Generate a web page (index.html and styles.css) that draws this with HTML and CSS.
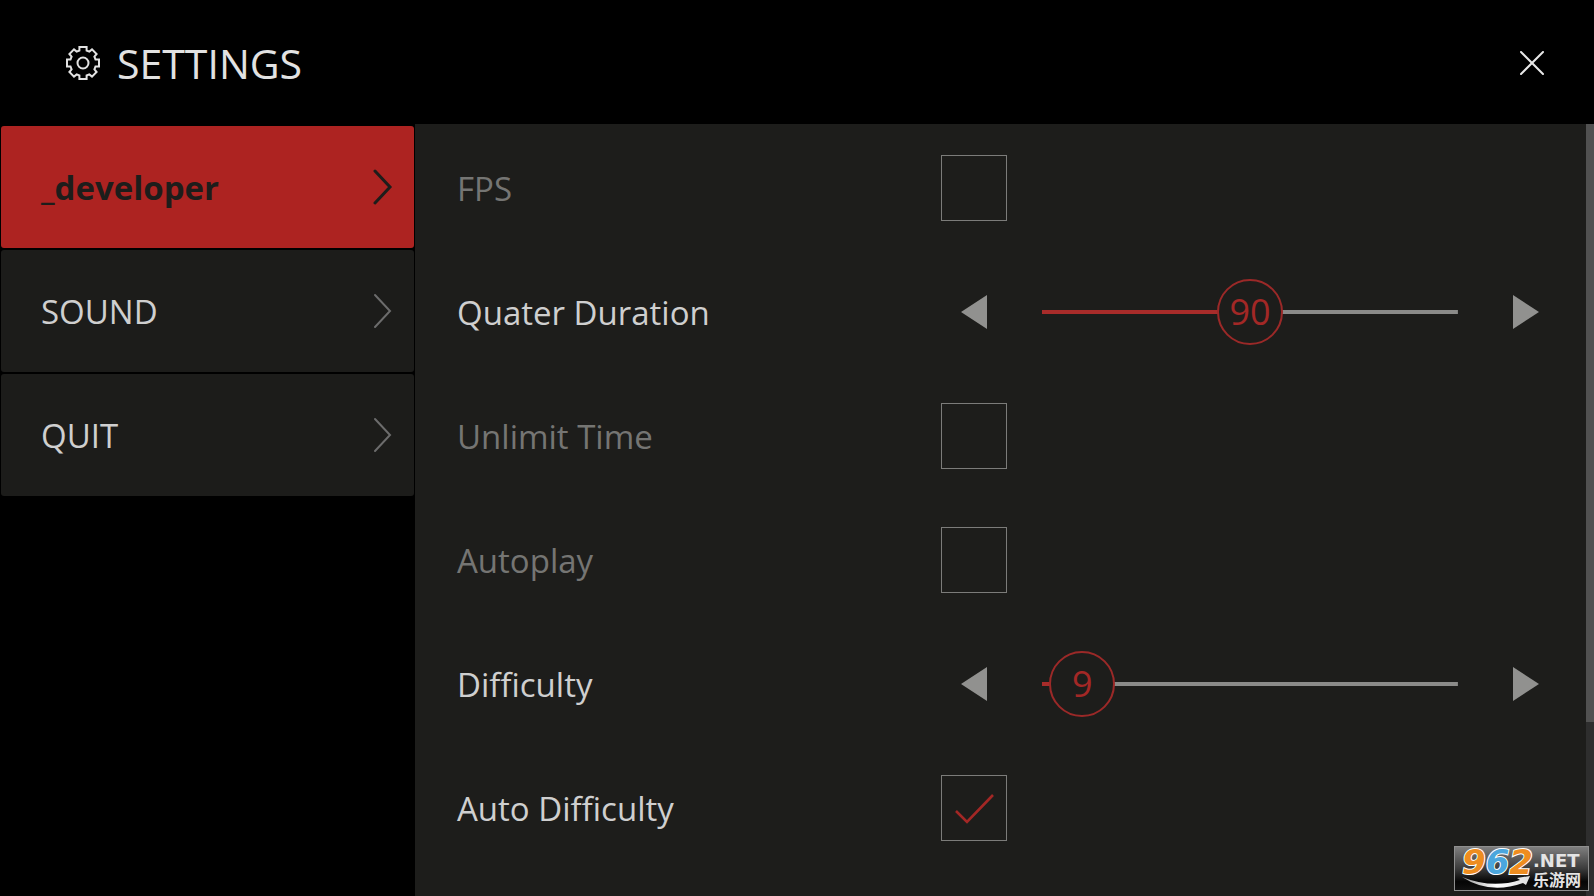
FILE: index.html
```html
<!DOCTYPE html>
<html lang="en">
<head>
  <meta charset="UTF-8">
  <meta name="viewport" content="width=device-width, initial-scale=1">
  <title>Settings</title>
  <link rel="stylesheet" href="styles.css">
</head>
<body>
  <header class="header">
    <svg class="gear" viewBox="-18 -18 36 36" width="36" height="36" aria-hidden="true">
      <path d="M-3.6-16H3.6V-12.5L6.3-11.4L9-13.6L13.6-9L11.4-6.3L12.5-3.6H16V3.6H12.5L11.4 6.3L13.6 9L9 13.6L6.3 11.4L3.6 12.5V16H-3.6V12.5L-6.3 11.4L-9 13.6L-13.6 9L-11.4 6.3L-12.5 3.6H-16V-3.6H-12.5L-11.4-6.3L-13.6-9L-9-13.6L-6.3-11.4L-3.6-12.5Z"/>
      <circle r="5.5"/>
    </svg>
    <h1>SETTINGS</h1>
    <button class="close" type="button" aria-label="Close">
      <svg viewBox="0 0 24 24" width="24" height="24"><path d="M1 1L23 23M23 1L1 23"/></svg>
    </button>
  </header>

  <div class="content">
    <nav class="menu">
      <button class="menu-item active" type="button">
        _developer
        <svg class="chevron" viewBox="0 0 20 36" width="20" height="36"><path d="M2 2L17 18L2 34"/></svg>
      </button>
      <button class="menu-item" type="button">
        SOUND
        <svg class="chevron" viewBox="0 0 20 36" width="20" height="36"><path d="M2 2L17 18L2 34"/></svg>
      </button>
      <button class="menu-item" type="button">
        QUIT
        <svg class="chevron" viewBox="0 0 20 36" width="20" height="36"><path d="M2 2L17 18L2 34"/></svg>
      </button>
    </nav>

    <main class="panel">
      <div class="row off">
        <label for="fps">FPS</label>
        <input class="check" type="checkbox" id="fps">
      </div>

      <div class="row">
        <label for="duration">Quater Duration</label>
        <div class="stepper">
          <button class="arrow" type="button" data-step="-1" aria-label="Decrease">
            <svg viewBox="0 0 26 34" width="26" height="34"><path d="M26 0V34L0 17Z"/></svg>
          </button>
          <div class="slider" style="--pos: 0.5">
            <input type="range" id="duration" min="0" max="180" value="90">
            <output for="duration">90</output>
          </div>
          <button class="arrow" type="button" data-step="1" aria-label="Increase">
            <svg viewBox="0 0 26 34" width="26" height="34"><path d="M0 0V34L26 17Z"/></svg>
          </button>
        </div>
      </div>

      <div class="row off">
        <label for="unlimit">Unlimit Time</label>
        <input class="check" type="checkbox" id="unlimit">
      </div>

      <div class="row off">
        <label for="autoplay">Autoplay</label>
        <input class="check" type="checkbox" id="autoplay">
      </div>

      <div class="row">
        <label for="difficulty">Difficulty</label>
        <div class="stepper">
          <button class="arrow" type="button" data-step="-1" aria-label="Decrease">
            <svg viewBox="0 0 26 34" width="26" height="34"><path d="M26 0V34L0 17Z"/></svg>
          </button>
          <div class="slider" style="--pos: 0.02">
            <input type="range" id="difficulty" min="1" max="400" value="9">
            <output for="difficulty">9</output>
          </div>
          <button class="arrow" type="button" data-step="1" aria-label="Increase">
            <svg viewBox="0 0 26 34" width="26" height="34"><path d="M0 0V34L26 17Z"/></svg>
          </button>
        </div>
      </div>

      <div class="row">
        <label for="autodiff">Auto Difficulty</label>
        <input class="check" type="checkbox" id="autodiff" checked>
      </div>
    </main>

    <div class="scrollbar"><div class="scroll-thumb"></div></div>
  </div>

  <div class="watermark">
    <svg viewBox="0 -10 135 55" width="135" height="55">
      <defs>
        <linearGradient id="plate" x1="0" y1="0" x2="0" y2="1">
          <stop offset="0" stop-color="#808080"/>
          <stop offset="0.5" stop-color="#3c3c3c"/>
          <stop offset="0.8" stop-color="#050505"/>
          <stop offset="1" stop-color="#111"/>
        </linearGradient>
        <linearGradient id="swoosh" x1="0" x2="1">
          <stop offset="0" stop-color="#999"/>
          <stop offset="0.5" stop-color="#fff"/>
          <stop offset="1" stop-color="#ddd"/>
        </linearGradient>
      </defs>
      <rect x="0.5" y="0.5" width="134" height="44" fill="url(#plate)" stroke="#8f8f8f"/>
      <text class="wm-num" x="8" y="28"><tspan class="orange">9</tspan><tspan class="blue">6</tspan><tspan class="orange">2</tspan></text>
      <path d="M8 31Q38 43 66 34L63 32L76 30L72 39L69 37Q36 49 8 31Z" fill="url(#swoosh)"/>
      <text class="wm-net" x="79" y="21">.NET</text>
      <text class="wm-cn" x="79" y="40">乐游网</text>
    </svg>
  </div>

  <script>
    document.querySelectorAll('.slider').forEach(slider => {
      const input = slider.querySelector('input');
      const output = slider.querySelector('output');

      function update() {
        const pos = (input.value - input.min) / (input.max - input.min);
        slider.style.setProperty('--pos', pos);
        output.textContent = input.value;
      }

      input.addEventListener('input', update);

      slider.parentElement.querySelectorAll('.arrow').forEach(arrow => {
        arrow.addEventListener('click', () => {
          input.value = Number(input.value) + Number(arrow.dataset.step);
          update();
        });
      });
    });

    document.querySelectorAll('.check').forEach(check => {
      check.addEventListener('change', () => {
        check.parentElement.classList.toggle('off', !check.checked);
      });
    });
  </script>
</body>
</html>
```

FILE: styles.css
```css
* {
  box-sizing: border-box;
}

body {
  margin: 0;
  height: 100vh;
  display: flex;
  flex-direction: column;
  overflow: hidden;
  background: #000;
  color: #cfcfcf;
  font-family: "Open Sans", "Noto Sans", sans-serif;
  font-size: 33px;
}

button {
  border: none;
  background: none;
  padding: 0;
  color: inherit;
  font: inherit;
  cursor: pointer;
}

svg {
  display: block;
}

/* header */
.header {
  display: flex;
  align-items: center;
  flex: none;
  height: 124px;
  padding: 2px 38px 0 65px;
}

.header h1 {
  margin: 0 auto 0 16px;
  color: #e2e2e2;
  font-size: 41px;
  font-weight: 400;
}

.gear {
  fill: none;
  stroke: #e2e2e2;
  stroke-width: 2;
}

.close {
  display: flex;
  align-items: center;
  justify-content: center;
  width: 48px;
  height: 48px;
}

.close path {
  stroke: #e8e8e8;
  stroke-width: 2;
  stroke-linecap: round;
}

.content {
  display: flex;
  flex: 1;
  min-height: 0;
}

/* left menu */
.menu {
  display: flex;
  flex-direction: column;
  gap: 2px;
  flex: none;
  width: 415px;
  padding: 2px 1px;
}

.menu-item {
  display: flex;
  align-items: center;
  justify-content: space-between;
  height: 122px;
  padding: 0 21px 0 40px;
  border-radius: 3px;
  background: #1c1c1a;
}

.menu-item.active {
  background: #ad2321;
  color: #1d1d1b;
  font-weight: 700;
}

.chevron {
  fill: none;
  stroke: #6c6c6c;
  stroke-width: 2;
  stroke-linecap: round;
}

.active .chevron {
  stroke: #1d1d1b;
  stroke-width: 3;
}

/* settings list */
.panel {
  flex: 1;
  padding-top: 2px;
  overflow: hidden;
  background: #1d1d1b;
}

.row {
  display: grid;
  grid-template-columns: 46% 1fr;
  align-items: center;
  height: 124px;
  padding-right: 27px;
}

.row label {
  padding-left: 42px;
}

.row.off label {
  color: #757573;
}

.check {
  appearance: none;
  width: 66px;
  height: 66px;
  margin: 0;
  border: 1px solid #7c7c7a;
}

.check:checked {
  background: url("data:image/svg+xml,%3Csvg xmlns='http://www.w3.org/2000/svg' viewBox='0 0 64 64'%3E%3Cpath d='M14 35L25 46L51 19' fill='none' stroke='%23a32725' stroke-width='2.6'/%3E%3C/svg%3E") center / 64px 64px no-repeat;
}

.stepper {
  display: flex;
  align-items: center;
  gap: 35px;
}

.arrow {
  display: flex;
  align-items: center;
  justify-content: center;
  flex: none;
  width: 66px;
  height: 66px;
}

.arrow path {
  fill: #91918f;
}

.slider {
  --center: calc(33px + (100% - 66px) * var(--pos));
  position: relative;
  flex: 1;
  height: 66px;
}

.slider input {
  appearance: none;
  display: block;
  width: 100%;
  height: 66px;
  margin: 0;
  background: none;
}

.slider input::-webkit-slider-runnable-track {
  height: 66px;
  background: linear-gradient(to right, #a82c2a var(--center), #8b8b89 var(--center)) center / 100% 4px no-repeat;
}

.slider input::-webkit-slider-thumb {
  appearance: none;
  width: 66px;
  height: 66px;
  border: 2px solid #9b2928;
  border-radius: 50%;
  background: #1d1d1b;
}

/* value shown on top of the thumb */
.slider output {
  position: absolute;
  top: 0;
  left: var(--center);
  transform: translateX(-50%);
  color: #a32826;
  font-size: 36px;
  line-height: 66px;
  pointer-events: none;
}

.scrollbar {
  flex: none;
  width: 8px;
  background: #2e2e2e;
}

.scroll-thumb {
  height: 77.5%;
  background: #515151;
}

/* site logo */
.watermark {
  position: absolute;
  right: 5px;
  bottom: 5px;
}

.wm-num {
  font: italic 700 34px "DejaVu Sans", sans-serif;
  stroke: #fff;
  stroke-width: 2px;
  paint-order: stroke;
}

.orange {
  fill: #ee8d20;
}

.blue {
  fill: #4ba6dd;
}

.wm-net {
  fill: #e4e4e4;
  font: 700 18px "DejaVu Sans", sans-serif;
}

.wm-cn {
  fill: #e4e4e4;
  font: 700 16px "Noto Sans CJK SC", sans-serif;
}
```
